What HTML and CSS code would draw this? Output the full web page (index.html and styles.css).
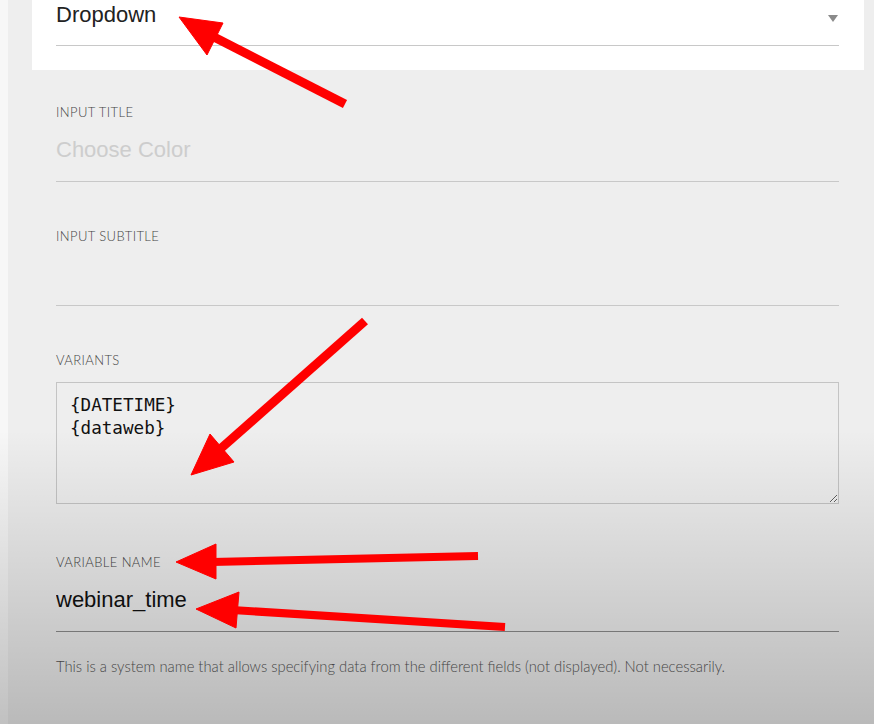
FILE: index.html
```html
<!DOCTYPE html>
<html lang="en">
<head>
<meta charset="UTF-8" />
<title>Field settings</title>
<link rel="stylesheet" href="styles.css">
</head>
<body>
<div class="panel">
	<div class="card">
		<div class="select">
			<span>Dropdown</span>
			<span class="caret"></span>
		</div>
	</div>
	<div class="field">
		<label>Input title</label>
		<input type="text" class="line" placeholder="Choose Color" />
	</div>
	<div class="field">
		<label>Input subtitle</label>
		<input type="text" class="line" />
	</div>
	<div class="field">
		<label>Variants</label>
		<textarea class="variants">{DATETIME}
{dataweb}</textarea>
	</div>
	<div class="field name">
		<label>Variable name</label>
		<input type="text" class="line dark" value="webinar_time" />
		<p class="hint">This is a system name that allows specifying data from the different fields (not displayed). Not necessarily.</p>
	</div>
</div>
<div class="shade"></div>
<svg class="arrows" width="874" height="724" viewBox="0 0 874 724">
	<g fill="#ff0000" stroke="#ff0000">
		<line x1="345" y1="104" x2="212" y2="36" stroke-width="9" />
		<polygon points="179,17 223,23 207,55" stroke-width="1" />
		<line x1="365" y1="321" x2="218" y2="451" stroke-width="9" />
		<polygon points="191,475 210,434 234,462" stroke-width="1" />
		<line x1="478" y1="556" x2="212" y2="562" stroke-width="8" />
		<polygon points="176,562 216,544 216,579" stroke-width="1" />
		<line x1="505" y1="627" x2="232" y2="610" stroke-width="8" />
		<polygon points="196,609 239,592 236,628" stroke-width="1" />
	</g>
</svg>
</body>
</html>
```
FILE: styles.css
```css
html, body{
	margin: 0;
	height: 100%;
	overflow: hidden;
}
body{
	background: #f7f7f7;
	font-family: "Liberation Sans", Arial, sans-serif;
	position: relative;
}
.panel{
	margin-left: 8px;
	height: 100%;
	background: #eeeeee;
	padding: 0 35px 0 48px;
}
.card{
	background: #ffffff;
	margin: 0 -25px 0 -24px;
	padding: 0 25px 24px 24px;
}
.select{
	display: flex;
	justify-content: space-between;
	align-items: flex-start;
	padding: 2px 0 17px;
	line-height: 26px;
	font-size: 22px;
	color: #222;
	border-bottom: 1px solid #c8c8c8;
}
.caret{
	width: 0;
	height: 0;
	margin: 13px 1px 0 0;
	border-left: 5.5px solid transparent;
	border-right: 5.5px solid transparent;
	border-top: 7px solid #8a8a8a;
}
.field{
	padding-top: 46px;
}
.card + .field{
	padding-top: 34px;
}
label{
	display: block;
	font-family: Lato, "Liberation Sans", sans-serif;
	font-weight: 300;
	font-size: 13px;
	line-height: 16px;
	letter-spacing: 0.4px;
	text-transform: uppercase;
	color: #444;
	margin-bottom: 14px;
}
.line{
	display: block;
	box-sizing: border-box;
	width: 100%;
	height: 48px;
	margin: 0;
	padding: 3px 0 18px;
	line-height: 26px;
	font-family: "Liberation Sans", Arial, sans-serif;
	font-size: 22px;
	color: #111;
	background: transparent;
	border: 0;
	border-bottom: 1px solid #c8c8c8;
	outline: none;
}
.line::placeholder{
	color: #cdcdcd;
}
.line.dark{
	border-bottom-color: #8c8c8c;
}
.variants{
	display: block;
	box-sizing: border-box;
	width: 100%;
	height: 122px;
	margin: 0 0 4px;
	padding: 11px 13px;
	font-family: "DejaVu Sans Mono", monospace;
	font-size: 17.6px;
	line-height: 23px;
	color: #111;
	background: transparent;
	border: 1px solid #c4c4c4;
	border-radius: 0;
	resize: vertical;
	outline: none;
}
.hint{
	margin: 25px 0 0;
	font-family: Lato, "Liberation Sans", sans-serif;
	font-weight: 300;
	font-size: 14.8px;
	line-height: 18px;
	color: #555;
}
.shade{
	position: absolute;
	inset: 0;
	pointer-events: none;
	background: linear-gradient(to bottom, rgba(0,0,0,0) 0, rgba(0,0,0,0) 430px, rgba(0,0,0,0.22) 724px);
}
.arrows{
	position: absolute;
	left: 0;
	top: 0;
	pointer-events: none;
}
```
